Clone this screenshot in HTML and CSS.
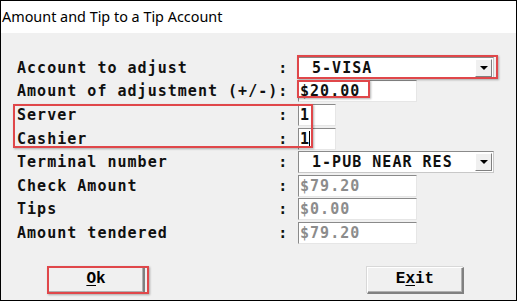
FILE: index.html
```html
<!DOCTYPE html>
<html>
<head>
<meta charset="utf-8">
<link rel="stylesheet" href="styles.css">
</head>
<body>
<div class="window">
  <div class="titlebar">Amount and Tip to a Tip Account</div>
  <div class="client">
    <div class="form">
      <div class="row">
        <span class="label">Account to adjust         :</span>
        <div class="combo"><span class="combo-text">5-VISA</span><span class="drop"><span class="arrow"></span></span></div>
      </div>
      <div class="row">
        <span class="label">Amount of adjustment (+/-):</span>
        <div class="field wide"><span class="val">$20.00</span></div>
      </div>
      <div class="row">
        <span class="label">Server                    :</span>
        <div class="field narrow"><span class="val">1</span></div>
      </div>
      <div class="row">
        <span class="label">Cashier                   :</span>
        <div class="field narrow"><span class="val">1</span><span class="caret"></span></div>
      </div>
      <div class="row">
        <span class="label">Terminal number           :</span>
        <div class="combo"><span class="combo-text">1-PUB NEAR RES</span><span class="drop"><span class="arrow"></span></span></div>
      </div>
      <div class="row">
        <span class="label">Check Amount              :</span>
        <div class="field wide"><span class="val dim">$79.20</span></div>
      </div>
      <div class="row">
        <span class="label">Tips                      :</span>
        <div class="field wide"><span class="val dim">$0.00</span></div>
      </div>
      <div class="row">
        <span class="label">Amount tendered           :</span>
        <div class="field wide"><span class="val dim">$79.20</span></div>
      </div>
    </div>
    <div class="buttons">
      <div class="btn"><span><u>O</u>k</span></div>
      <div class="btn"><span>E<u>x</u>it</span></div>
    </div>
    <div class="mark mark-account"></div>
    <div class="mark mark-amount"></div>
    <div class="mark mark-staff"></div>
    <div class="mark mark-ok"></div>
  </div>
</div>
</body>
</html>
```

FILE: styles.css
```css
* { box-sizing: border-box; }
html, body { margin: 0; padding: 0; background: #ffffff; }
.window {
  position: relative;
  width: 517px;
  height: 301px;
  border: 1px solid #000;
  display: flex;
  flex-direction: column;
  background: #f0f0f0;
}
.titlebar {
  height: 32px;
  background: #ffffff;
  font-family: "Noto Sans", sans-serif;
  font-size: 14.4px;
  line-height: 20px;
  padding: 6px 0 0 1px;
  color: #000;
}
.client {
  flex: 1;
  position: relative;
  padding-top: 23px;
}
.form {
  display: flex;
  flex-direction: column;
  padding-left: 16px;
}
.row {
  height: 23.6px;
  display: flex;
  align-items: center;
  gap: 10px;
}
.label, .val, .combo-text {
  font-family: "DejaVu Sans Mono", monospace;
  font-weight: bold;
  font-size: 15px;
  letter-spacing: 1.02px;
  white-space: pre;
  color: #101010;
}
.label { width: 271px; }
.field {
  height: 22px;
  background: #fff;
  border-top: 1px solid #8a8a8a;
  border-left: 1px solid #8a8a8a;
  border-right: 1px solid #e6e6e6;
  border-bottom: 1px solid #e6e6e6;
  display: flex;
  align-items: center;
  padding-left: 1px;
}
.wide { width: 119px; }
.narrow { width: 38px; }
.val.dim { color: #8c8c8c; }
.caret {
  width: 1px;
  height: 16px;
  background: #000;
  margin-left: -1px;
}
.combo {
  width: 196px;
  height: 22px;
  background: #fff;
  border: 1px solid #8a8a8a;
  border-right-color: #c8c8c8;
  border-bottom-color: #c8c8c8;
  display: flex;
  align-items: center;
  padding-left: 13px;
  padding-right: 1px;
}
.combo-text { flex: 1; }
.drop {
  width: 17px;
  height: 18px;
  background: #f0f0f0;
  border-top: 1px solid #fff;
  border-left: 1px solid #fff;
  border-right: 1px solid #808080;
  border-bottom: 1px solid #808080;
  display: flex;
  align-items: center;
  justify-content: center;
}
.arrow {
  width: 0;
  height: 0;
  border-left: 4px solid transparent;
  border-right: 4px solid transparent;
  border-top: 4px solid #000;
}
.buttons {
  display: flex;
  justify-content: space-between;
  padding: 22px 52px 0 47px;
}
.btn {
  width: 97px;
  height: 27px;
  background: #f0f0f0;
  border-top: 1px solid #ffffff;
  border-left: 1px solid #ffffff;
  border-right: 2px solid #808080;
  border-bottom: 2px solid #808080;
  box-shadow: inset -1px -1px 0 #b0b0b0, -1px -1px 0 #d8d8d8;
  display: flex;
  align-items: center;
  justify-content: center;
  font-family: "Liberation Mono", monospace;
  font-weight: bold;
  font-size: 16px;
  color: #000;
  padding-bottom: 2px;
}
.btn u { text-underline-offset: 2px; }
.mark {
  position: absolute;
  border: 2px solid #e0474a;
  box-shadow: 1px 1px 2px rgba(0,0,0,0.3);
  pointer-events: none;
}
.mark-account { left: 296px; top: 22px; width: 201px; height: 24px; }
.mark-amount { left: 296px; top: 47px; width: 73px; height: 18px; }
.mark-staff { left: 12px; top: 71px; width: 300px; height: 44px; }
.mark-ok { left: 46px; top: 233px; width: 102px; height: 28px; }
```
